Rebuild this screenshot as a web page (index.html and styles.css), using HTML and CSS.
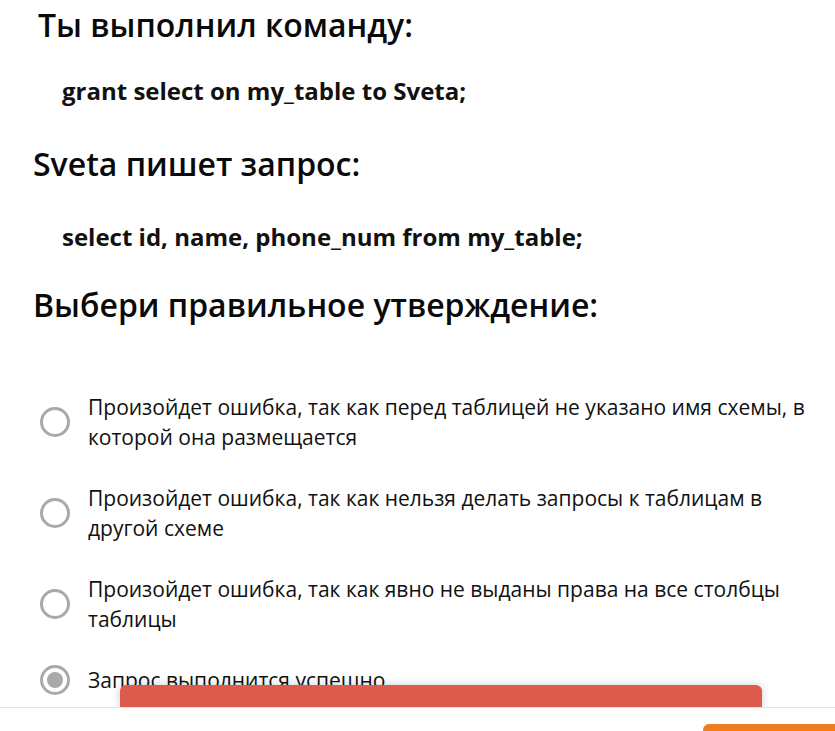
FILE: index.html
```html
<!DOCTYPE html>
<html lang="ru">
<head>
<meta charset="utf-8">
<title>Вопрос</title>
<link rel="stylesheet" href="styles.css">
</head>
<body>
<div class="page">
  <h1 class="title title-first">Ты выполнил команду:</h1>
  <p class="code code-first">grant select on my_table to Sveta;</p>
  <h2 class="title title-second">Sveta пишет запрос:</h2>
  <p class="code code-second">select id, name, phone_num from my_table;</p>
  <h2 class="title title-third">Выбери правильное утверждение:</h2>
  <ul class="options">
    <li class="option"><span class="radio"></span><span class="label">Произойдет ошибка, так как перед таблицей не указано имя схемы, в которой она размещается</span></li>
    <li class="option"><span class="radio"></span><span class="label">Произойдет ошибка, так как нельзя делать запросы к таблицам в другой схеме</span></li>
    <li class="option"><span class="radio"></span><span class="label">Произойдет ошибка, так как явно не выданы права на все столбцы таблицы</span></li>
    <li class="option"><span class="radio radio-checked"></span><span class="label">Запрос выполнится успешно</span></li>
  </ul>
</div>
<div class="toast"></div>
<div class="footer">
  <div class="btn"></div>
</div>
</body>
</html>
```
FILE: styles.css
```css
html, body {
  margin: 0;
  padding: 0;
  background: #fff;
  overflow: hidden;
}
body {
  font-family: "Open Sans", "Liberation Sans", sans-serif;
  color: #111;
  width: 835px;
  height: 731px;
  position: relative;
}
.page {
  padding: 0 18px 0 33px;
}
.title {
  font-size: 32px;
  font-weight: 600;
  line-height: 40px;
  margin: 0;
  color: #0a0a0a;
}
.title-first {
  padding-top: 5px;
  padding-left: 5px;
}
.title-second {
  margin-top: 38px;
}
.title-third {
  margin-top: 33px;
}
.code {
  font-size: 24px;
  font-weight: 700;
  line-height: 30px;
  margin: 31px 0 0 29px;
  color: #111;
}
.code-second {
  margin-top: 38px;
}
.options {
  list-style: none;
  margin: 67px 0 0 0;
  padding: 0;
}
.option {
  display: flex;
  align-items: center;
  gap: 18px;
  margin-bottom: 31px;
}
.radio {
  flex: none;
  width: 24px;
  height: 24px;
  border: 3px solid #a9a9a9;
  border-radius: 50%;
  margin-left: 7px;
  position: relative;
}
.radio-checked::after {
  content: "";
  position: absolute;
  left: 4px;
  top: 4px;
  width: 16px;
  height: 16px;
  border-radius: 50%;
  background: #a9a9a9;
}
.label {
  font-size: 21px;
  line-height: 30px;
  color: #111;
}
.toast {
  position: absolute;
  left: 120px;
  top: 685px;
  width: 642px;
  height: 22px;
  background: #dc5b4d;
  border-radius: 6px 6px 0 0;
  box-shadow: 0 0 8px rgba(0,0,0,0.2);
}
.footer {
  position: absolute;
  left: 0;
  right: 0;
  top: 707px;
  bottom: 0;
  background: #fff;
  border-top: 1px solid #e3e3e3;
}
.btn {
  position: absolute;
  left: 703px;
  right: 0;
  top: 16px;
  height: 40px;
  background: #ee7d1e;
  border-radius: 6px 0 0 0;
}
```
